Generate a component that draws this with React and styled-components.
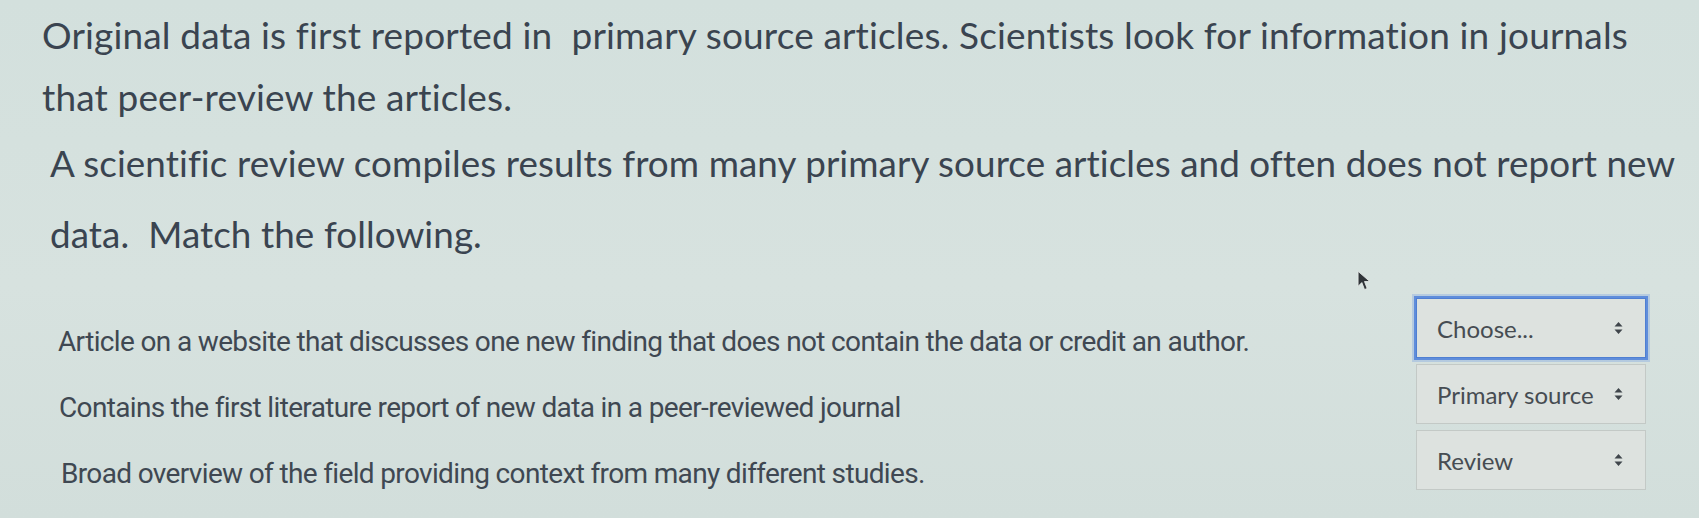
import styled, { createGlobalStyle } from "styled-components";

const GlobalStyle = createGlobalStyle`
  html, body {
    margin: 0;
    padding: 0;
    background: #d4e1de;
  }
  #root {
    min-height: 518px;
  }
`;

const Page = styled.div`
  position: relative;
  box-sizing: border-box;
  width: 1699px;
  height: 518px;
  overflow: hidden;
  padding: 4px 8px 0 42px;
  background: linear-gradient(180deg, #d3e0dd 0%, #d7e2df 55%, #d2dedb 100%);
  color: #3a4450;
`;

const Intro = styled.p`
  margin: 0 0 ${(p) => p.$gap || 0}px ${(p) => p.$indent || 0}px;
  font-family: Lato, "Noto Sans", sans-serif;
  font-size: ${(p) => p.$size || 37}px;
  line-height: ${(p) => p.$line || 62}px;
  letter-spacing: ${(p) => p.$spacing || 0}px;
  white-space: pre;
`;

const MatchList = styled.div`
  display: grid;
  grid-template-columns: 1fr 230px;
  row-gap: 6px;
  margin-top: 28px;
  padding-right: 45px;
`;

const Label = styled.div`
  align-self: end;
  padding-left: ${(p) => p.$indent || 16}px;
  font-family: Roboto, "Liberation Sans", sans-serif;
  font-size: 28px;
  line-height: 32px;
  letter-spacing: -0.65px;
  color: #3f4852;
`;

const Select = styled.div`
  box-sizing: border-box;
  display: flex;
  align-items: center;
  justify-content: space-between;
  height: 60px;
  padding: 0 22px 0 20px;
  background: #dde2df;
  border: 1px solid ${(p) => (p.$focused ? "#4f7fd2" : "#c3c9c6")};
  box-shadow: ${(p) =>
    p.$focused ? "0 0 0 2px #5f8ddb, 0 0 0 4px rgba(120,160,225,0.35)" : "none"};
  font-family: Lato, "Noto Sans", sans-serif;
  font-size: 24px;
  color: #464c52;
`;

const Arrows = styled.svg`
  width: 9px;
  height: 14px;
  flex: none;
`;

const Cursor = styled.svg`
  position: absolute;
  left: 1357px;
  top: 270px;
  width: 15px;
  height: 22px;
`;

const rows = [
  {
    text: "Article on a website that discusses one new finding that does not contain the data or credit an author.",
    value: "Choose...",
    focused: true,
    indent: 16,
  },
  {
    text: "Contains the first literature report of new data in a peer-reviewed journal",
    value: "Primary source",
    indent: 17,
  },
  {
    text: "Broad overview of the field providing context from many different studies.",
    value: "Review",
    indent: 19,
  },
];

function UpDown() {
  return (
    <Arrows viewBox="0 0 9 14">
      <path d="M4.5 1 L8.5 5.5 H0.5 Z M4.5 13 L8.5 8.5 H0.5 Z" fill="#3f454b" />
    </Arrows>
  );
}

export default function App() {
  return (
    <>
      <GlobalStyle />
      <Page>
        <Intro $spacing={0.15}>
          {"Original data is first reported in  primary source articles. Scientists look for information in journals\nthat peer-review the articles."}
        </Intro>
        <Intro $indent={8} $size={36.8} $line={71} $spacing={0.08}>
          {"A scientific review compiles results from many primary source articles and often does not report new\ndata.  Match the following."}
        </Intro>
        <MatchList>
          {rows.map((row) => (
            <>
              <Label key={row.text} $indent={row.indent}>
                {row.text}
              </Label>
              <Select key={row.value} $focused={row.focused}>
                <span>{row.value}</span>
                <UpDown />
              </Select>
            </>
          ))}
        </MatchList>
        <Cursor viewBox="0 0 14 20">
          <path
            d="M1 1 L1 15 L4.5 11.5 L7 18 L9.5 17 L7 10.5 L12 10.5 Z"
            fill="#2f3438"
            stroke="#e8ecea"
            strokeWidth="0.8"
          />
        </Cursor>
      </Page>
    </>
  );
}
